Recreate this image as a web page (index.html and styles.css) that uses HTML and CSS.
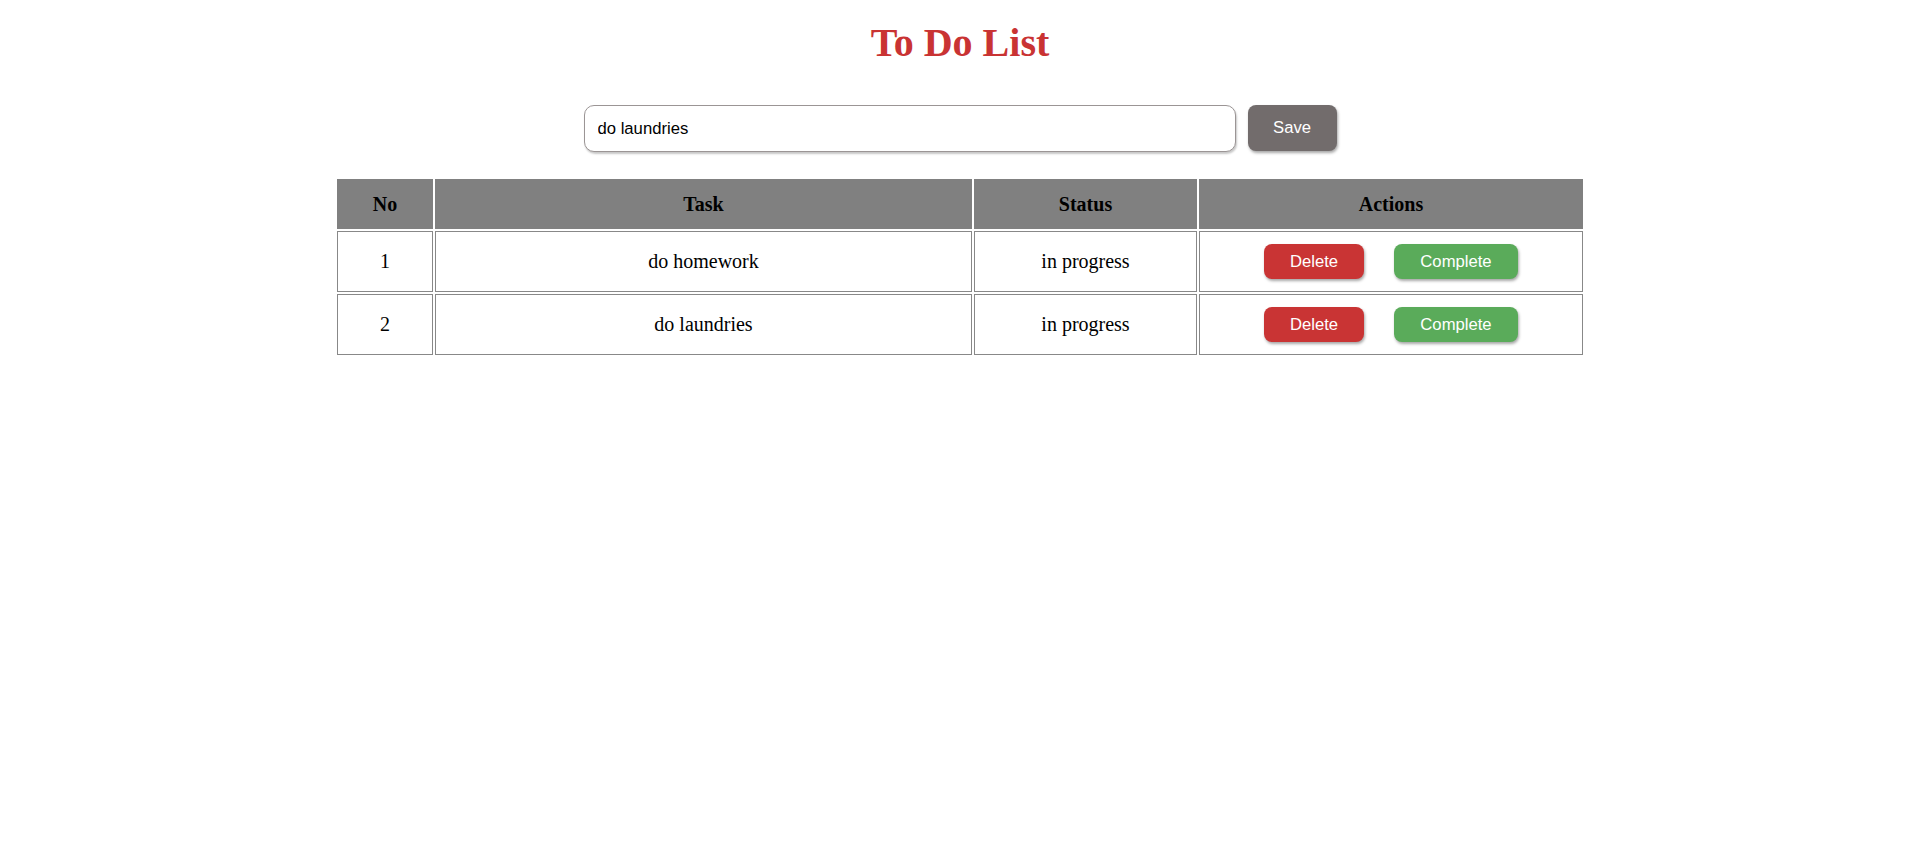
FILE: index.html
```html
<!DOCTYPE html>
<html lang="en">
<head>
<meta charset="utf-8">
<title>To Do List</title>
<link rel="stylesheet" href="styles.css">
</head>
<body>
<div class="app">
  <h1 class="title">To Do List</h1>
  <form class="add-form">
    <input class="task-input" type="text" value="do laundries">
    <button class="btn btn-save" type="button">Save</button>
  </form>
  <table class="task-table">
    <colgroup>
      <col class="col-no">
      <col class="col-task">
      <col class="col-status">
      <col class="col-actions">
    </colgroup>
    <thead>
      <tr>
        <th>No</th>
        <th>Task</th>
        <th>Status</th>
        <th>Actions</th>
      </tr>
    </thead>
    <tbody>
      <tr>
        <td>1</td>
        <td>do homework</td>
        <td>in progress</td>
        <td>
          <div class="actions">
            <button class="btn btn-delete" type="button">Delete</button>
            <button class="btn btn-complete" type="button">Complete</button>
          </div>
        </td>
      </tr>
      <tr>
        <td>2</td>
        <td>do laundries</td>
        <td>in progress</td>
        <td>
          <div class="actions">
            <button class="btn btn-delete" type="button">Delete</button>
            <button class="btn btn-complete" type="button">Complete</button>
          </div>
        </td>
      </tr>
    </tbody>
  </table>
</div>
</body>
</html>
```

FILE: styles.css
```css
html, body {
  margin: 0;
  padding: 0;
  background: #ffffff;
}

body {
  font-family: "Liberation Serif", "Times New Roman", serif;
  color: #000;
}

.app {
  display: flex;
  flex-direction: column;
  align-items: center;
  padding-left: 3px;
}

.title {
  margin: 20px 0 0;
  font-size: 40px;
  line-height: 46px;
  font-weight: bold;
  color: #c93333;
  text-align: center;
}

.add-form {
  display: flex;
  justify-content: center;
  align-items: flex-start;
  gap: 12px;
  margin: 39px 0 0;
}

.task-input {
  box-sizing: border-box;
  width: 652px;
  height: 47px;
  padding: 0 13px;
  border: 1px solid #9b9595;
  border-radius: 10px;
  box-shadow: 1px 2px 2px rgba(0, 0, 0, 0.22);
  font-family: "Liberation Sans", Arial, sans-serif;
  font-size: 16.67px;
  color: #000;
  background: #fff;
  outline: none;
}

.btn {
  box-sizing: border-box;
  border: none;
  border-radius: 8px;
  color: #fff;
  font-family: "Liberation Sans", Arial, sans-serif;
  font-size: 16.67px;
  padding: 0;
  cursor: pointer;
  box-shadow: 1px 2px 3px rgba(0, 0, 0, 0.35);
}

.btn-save {
  width: 89px;
  height: 46px;
  background: #726c6c;
}

.task-table {
  margin-top: 25px;
  border-collapse: separate;
  border-spacing: 2px;
  table-layout: fixed;
  width: 1250px;
}

.col-no { width: 96px; }
.col-task { width: 537px; }
.col-status { width: 223px; }
.col-actions { width: 384px; }

.task-table th,
.task-table td {
  box-sizing: border-box;
  text-align: center;
  vertical-align: middle;
  font-size: 20px;
  padding: 0;
}

.task-table th {
  height: 50px;
  background: #808080;
  border: 1px solid #808080;
  font-weight: bold;
  color: #000;
}

.task-table td {
  height: 61px;
  border: 1px solid #888888;
  color: #000;
}

.actions {
  display: flex;
  justify-content: center;
  align-items: center;
  gap: 30px;
}

.btn-delete {
  width: 100px;
  height: 35px;
  background: #c93434;
}

.btn-complete {
  width: 124px;
  height: 35px;
  background: #5aab5a;
}
```
